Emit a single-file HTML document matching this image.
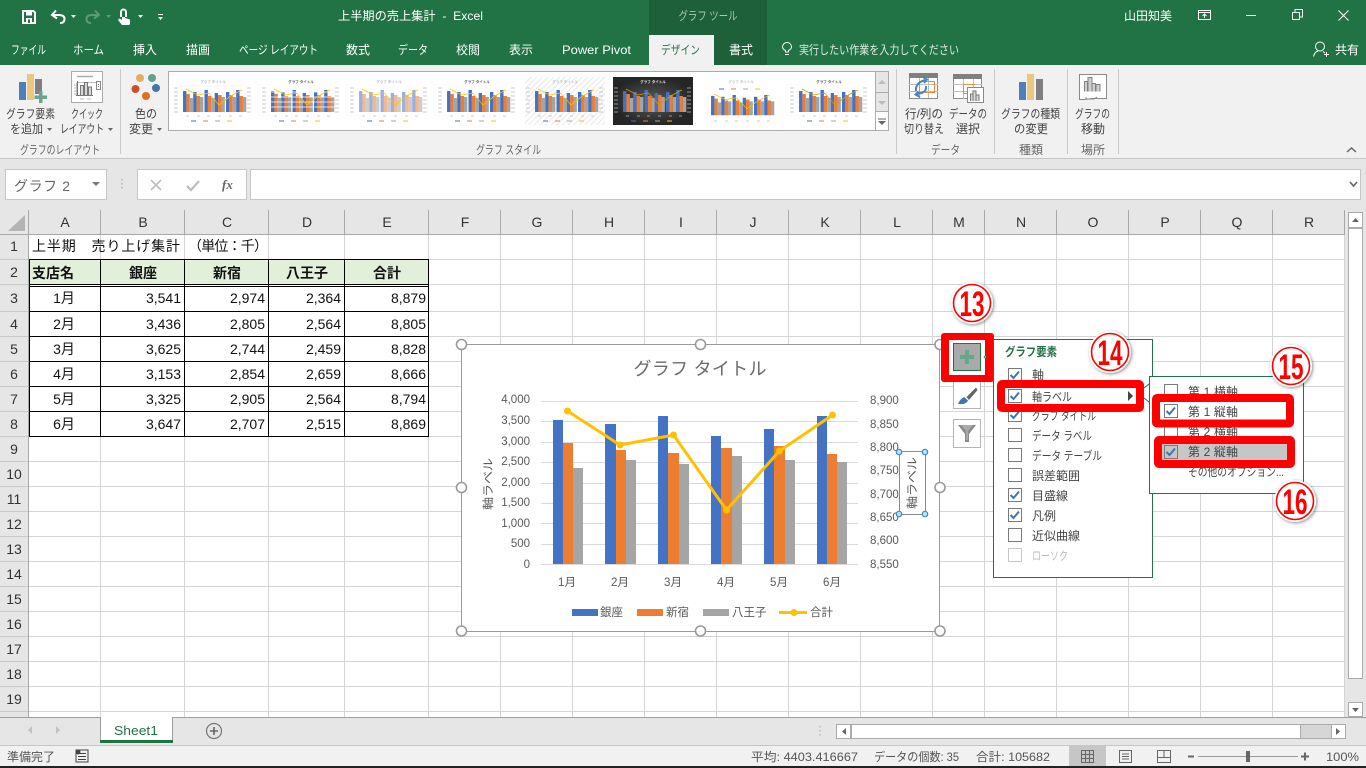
<!DOCTYPE html>
<html lang="ja"><head><meta charset="utf-8"><title>上半期の売上集計 - Excel</title>
<style>
html,body{margin:0;padding:0;background:#fff;overflow:hidden;width:1366px;height:768px}
svg{display:block;font-family:"Liberation Sans","Noto Sans CJK JP",sans-serif}
.tb{font-size:12px;fill:#fff}
.rb{font-size:12px;fill:#444}
.gp{font-size:12px;fill:#666}
.ch{font-size:14px;fill:#333;text-anchor:middle}
.c{font-size:14px;fill:#111}
.r{text-anchor:end}
.m{text-anchor:middle}
.b{font-weight:bold}
.ax{font-size:11.5px;fill:#595959}
.it{font-size:12px;fill:#444}
.st{font-size:12px;fill:#555}
.nm{font-size:35px;font-weight:bold;fill:#f00;text-anchor:middle}
</style></head><body>
<svg width="1366" height="768" viewBox="0 0 1366 768" xmlns="http://www.w3.org/2000/svg">
<defs>
<g id="bars" transform="translate(1 0) scale(1.13 1)">
<path fill="#4472c4" d="M8 14h3v21H8zM17 15h3v20h-3zM27 13h3v22h-3zM36 16h3v19h-3zM46 15h3v20h-3zM55 13h3v22h-3z"/>
<path fill="#ed7d31" d="M11 17h3v18h-3zM20 19h3v16h-3zM30 19h3v16h-3zM39 18h3v17h-3zM49 18h3v17h-3zM58 19h3v16h-3z"/>
<path fill="#a5a5a5" d="M14 21h3v14h-3zM23 20h3v15h-3zM33 21h3v14h-3zM42 20h3v15h-3zM52 20h3v15h-3zM61 20h3v15h-3z"/>
</g>
<path id="ln" d="M13 12L24.500 18L35.500 16L46 28L57.500 19L69 13" fill="none" stroke-width=".8"/>
<g id="ft"><path d="M1 11h4M1 15h4M1 19h4M1 23h4M1 27h4M1 31h4M1 35h4M74 11h4M74 15h4M74 19h4M74 23h4M74 27h4M74 31h4M74 35h4" stroke="#bbb" stroke-width=".7"/>
<path d="M13 39h3M24 39h3M34 39h3M45 39h3M56 39h3M66 39h3" stroke="#bbb" stroke-width=".7"/>
<path d="M18 44h5" stroke="#4472c4"/><path d="M30 44h5" stroke="#ed7d31"/><path d="M42 44h5" stroke="#a5a5a5"/><path d="M54 44h5" stroke="#ffc000"/></g>
<g id="cb"><rect x=".5" y=".5" width="13" height="13" fill="#fff" stroke="#7a7a7a"/></g>
<g id="ck"><rect x=".5" y=".5" width="13" height="13" fill="#fff" stroke="#7a7a7a"/><path d="M2.5 7L5.5 10L11 3.5" fill="none" stroke="#3f76b0" stroke-width="2"/></g>
<radialGradient id="dk"><stop offset="0" stop-color="#5a5a5a"/><stop offset="1" stop-color="#262626"/></radialGradient>
<filter id="sh" x="-20%" y="-20%" width="150%" height="150%"><feDropShadow dx="1" dy="1" stdDeviation="1.5" flood-color="#000" flood-opacity=".45"/></filter>
<pattern id="hat" width="4" height="4" patternUnits="userSpaceOnUse" patternTransform="rotate(45)"><rect width="4" height="4" fill="#fff"/><path d="M0 0V4" stroke="#ddd" stroke-width="1.4"/></pattern>
</defs>

<!-- title bar -->
<rect width="1366" height="65" fill="#217346"/>
<rect x="649" width="118" height="65" fill="#1e6039"/>
<rect x="649" y="35" width="65" height="30" fill="#f1f1f1"/>
<!-- QAT -->
<path fill="none" stroke="#fff" stroke-width="2" d="M23 11h10.500l1.500 1.500V23H23z"/>
<rect x="26" y="11" width="6" height="4.500" fill="#fff"/>
<rect x="26" y="18" width="6" height="5" fill="#fff"/>
<rect x="28" y="19.500" width="2" height="3.500" fill="#217346"/>
<path d="M56 10.500L52 15L57 18.500M52.500 15H59Q64.500 15 64.500 19Q64.500 23 60 23" fill="none" stroke="#fff" stroke-width="2"/>
<path d="M71 15h5l-2.500 3z" fill="#fff"/>
<path d="M95 10.500L99 15L94 18.500M98.500 15H92Q86.500 15 86.500 19Q86.500 23 91 23" fill="none" stroke="#5d9a78" stroke-width="2"/>
<path d="M106 15h5l-2.500 3z" fill="#5d9a78"/>
<path fill="#fff" d="M120 17V12a3.500 3.500 0 0 1 7 0v5h-2v-5a1.500 1.500 0 0 0-3 0v8l-2.500-1.500-1.500 1.500 4 5h7l1-1v-4.500l-5-1.500v-1z"/>
<path d="M138 15h5l-2.500 3z" fill="#fff"/>
<path d="M158 14h5v1h-5zM158 17h5l-2.500 3z" fill="#fff"/>
<text class="tb" x="338" y="20" textLength="145" lengthAdjust="spacingAndGlyphs" xml:space="preserve">上半期の売上集計  -  Excel</text>
<text x="708" y="20" font-size="12" fill="#a8c8b4" text-anchor="middle" textLength="59" lengthAdjust="spacingAndGlyphs">グラフ ツール</text>
<text class="tb" x="1124" y="20" textLength="48" lengthAdjust="spacingAndGlyphs">山田知美</text>
<path d="M1198.500 10.500h12v9h-12zM1198.500 12.500h12M1204.500 18v-4M1202.500 16l2-2 2 2" fill="none" stroke="#fff"/>
<path d="M1246 15.500h10" stroke="#fff"/>
<path d="M1292.500 12.500h7v7h-7zM1295 12v-2.500h7.500V17H1300" fill="none" stroke="#fff"/>
<path d="M1338.500 10.500l10 10M1348.500 10.500l-10 10" stroke="#fff" fill="none"/>
<!-- tabs -->
<text class="tb" x="11" y="54" textLength="35" lengthAdjust="spacingAndGlyphs">ファイル</text>
<text class="tb" x="73" y="54" textLength="31" lengthAdjust="spacingAndGlyphs">ホーム</text>
<text class="tb" x="133" y="54" textLength="24" lengthAdjust="spacingAndGlyphs">挿入</text>
<text class="tb" x="186" y="54" textLength="24" lengthAdjust="spacingAndGlyphs">描画</text>
<text class="tb" x="239" y="54" textLength="79" lengthAdjust="spacingAndGlyphs">ページ レイアウト</text>
<text class="tb" x="346" y="54" textLength="24" lengthAdjust="spacingAndGlyphs">数式</text>
<text class="tb" x="398" y="54" textLength="30" lengthAdjust="spacingAndGlyphs">データ</text>
<text class="tb" x="456" y="54" textLength="24" lengthAdjust="spacingAndGlyphs">校閲</text>
<text class="tb" x="509" y="54" textLength="24" lengthAdjust="spacingAndGlyphs">表示</text>
<text class="tb" x="562" y="54" textLength="69" lengthAdjust="spacingAndGlyphs">Power Pivot</text>
<text x="661" y="54" font-size="12" fill="#217346" textLength="39" lengthAdjust="spacingAndGlyphs">デザイン</text>
<text class="tb" x="729" y="54" textLength="24" lengthAdjust="spacingAndGlyphs">書式</text>
<path d="M785 54.500h4M785.500 52v-1.500Q782.500 49 782.500 47a4.500 4.500 0 0 1 9 0Q791.500 49 788.500 50.500V52z" fill="none" stroke="#fff"/>
<text x="799" y="54" font-size="12" fill="#dfeae4" textLength="160" lengthAdjust="spacingAndGlyphs">実行したい作業を入力してください</text>
<circle cx="1320" cy="46.500" r="4.500" fill="none" stroke="#fff"/>
<path d="M1313.500 56.500Q1314.500 52 1318 51M1323 51.500L1325 53M1324 54.500h5M1326.500 52v5" fill="none" stroke="#fff"/>
<text class="tb" x="1335" y="54" textLength="24" lengthAdjust="spacingAndGlyphs">共有</text>

<!-- ribbon -->
<rect y="65" width="1366" height="94" fill="#f1f1f1"/>
<rect y="158" width="1366" height="1" fill="#c6c6c6"/>
<path d="M120.500 69v85M896.500 69v85M994.500 69v85M1067.500 69v85M1118.500 69v85" stroke="#c9c9c9"/>
<!-- add element -->
<rect x="19" y="82" width="7" height="18" fill="#4e7fb6"/><rect x="27" y="74" width="7" height="26" fill="#eec77f"/><rect x="35" y="79" width="7" height="15" fill="#7f7f7f"/>
<path d="M39 91h3.500v4.500H47v3.500h-4.500v4H39v-4h-4.500v-3.500H39z" fill="#6ba58f"/>
<!-- quick layout -->
<rect x="71.500" y="71.500" width="31" height="31" fill="#fff" stroke="#ababab"/>
<path d="M77 76.500h16" stroke="#aaa" stroke-width="1.500"/>
<path d="M76.500 82.500h20M76.500 96v-13M76 85h-2M76 88h-2M76 91h-2M76 94h-2" stroke="#bbb" fill="none"/>
<path d="M77.500 95.500V81M80.500 95.500v-10h3v10M84.500 95.500V82.500h3v13M88.500 95.500V87h3v8.500M93 95.500H76" fill="#d8d8d8" stroke="#777"/>
<rect x="96.500" y="81.500" width="4" height="8" fill="#fff" stroke="#888"/>
<path d="M98.500 84v.7M98.500 86v.7" stroke="#555"/>
<path d="M80 99h4M87 99h4" stroke="#bbb"/>
<!-- colors -->
<circle cx="140" cy="78" r="4" fill="#e2ae62"/><circle cx="152" cy="78" r="4" fill="#5fa38f"/><circle cx="135.500" cy="89" r="4" fill="#cf4c2f"/><circle cx="156" cy="88" r="4" fill="#4276ae"/><circle cx="146" cy="96" r="4" fill="#e26f1d"/>
<!-- ribbon labels -->
<text class="rb" x="6" y="118" textLength="49" lengthAdjust="spacingAndGlyphs">グラフ要素</text>
<text class="rb" x="10" y="133" textLength="33" lengthAdjust="spacingAndGlyphs">を追加</text><path d="M47 128h5l-2.500 3z" fill="#666"/>
<text class="rb" x="71" y="118" textLength="32" lengthAdjust="spacingAndGlyphs">クイック</text>
<text class="rb" x="60" y="133" textLength="44" lengthAdjust="spacingAndGlyphs">レイアウト</text><path d="M108 128h5l-2.500 3z" fill="#666"/>
<text class="rb" x="135" y="118" textLength="22" lengthAdjust="spacingAndGlyphs">色の</text>
<text class="rb" x="129" y="133" textLength="24" lengthAdjust="spacingAndGlyphs">変更</text><path d="M157 128h5l-2.500 3z" fill="#666"/>
<text class="gp" x="20" y="154" textLength="80" lengthAdjust="spacingAndGlyphs">グラフのレイアウト</text>
<text class="gp" x="476" y="154" textLength="65" lengthAdjust="spacingAndGlyphs">グラフ スタイル</text>
<text class="rb" x="905" y="118" textLength="38" lengthAdjust="spacingAndGlyphs">行/列の</text>
<text class="rb" x="904" y="133" textLength="40" lengthAdjust="spacingAndGlyphs">切り替え</text>
<text class="rb" x="949" y="118" textLength="38" lengthAdjust="spacingAndGlyphs">データの</text>
<text class="rb" x="956" y="133" textLength="24" lengthAdjust="spacingAndGlyphs">選択</text>
<text class="gp" x="931" y="154" textLength="29" lengthAdjust="spacingAndGlyphs">データ</text>
<text class="rb" x="1001" y="118" textLength="59" lengthAdjust="spacingAndGlyphs">グラフの種類</text>
<text class="rb" x="1014" y="133" textLength="34" lengthAdjust="spacingAndGlyphs">の変更</text>
<text class="gp" x="1019" y="154" textLength="24" lengthAdjust="spacingAndGlyphs">種類</text>
<text class="rb" x="1075" y="118" textLength="35" lengthAdjust="spacingAndGlyphs">グラフの</text>
<text class="rb" x="1081" y="133" textLength="24" lengthAdjust="spacingAndGlyphs">移動</text>
<text class="gp" x="1081" y="154" textLength="24" lengthAdjust="spacingAndGlyphs">場所</text>
<!-- gallery -->
<rect x="168.500" y="71.500" width="707" height="59" fill="#fff" stroke="#ababab"/>
<rect x="875.500" y="71.500" width="13" height="59" fill="#fff" stroke="#ababab"/>
<rect x="876" y="72" width="12" height="39" fill="#e6e6e6"/>
<path d="M876 92.500h12M876 111.500h12" stroke="#ababab"/>
<path d="M878 84h8l-4-4z" fill="#bbb"/><path d="M878 101h8l-4 4z" fill="#bbb"/>
<path d="M878 121h8l-4 4z" fill="#666" stroke="none"/><path d="M878 119h8" stroke="#666"/>
<!-- thumbs -->
<g transform="translate(173 77)"><path d="M7 9h61M7 35h61" stroke="#eee" stroke-width=".6"/><text x="40" y="6" font-size="3.500" fill="#888" text-anchor="middle">グラフ タイトル</text><use href="#bars"/><use href="#ln" stroke="#ffc000"/><use href="#ft"/></g>
<g transform="translate(261 77)"><text x="40" y="6" font-size="3.500" fill="#555" font-weight="bold" text-anchor="middle">グラフ タイトル</text><use href="#bars"/><path d="M7 15h66M7 20h66M7 25h66M7 30h66" stroke="#fff" stroke-width=".8"/><use href="#ln" stroke="#ffc000"/><use href="#ft"/></g>
<g transform="translate(349 77)"><text x="40" y="6" font-size="3.500" fill="#888" text-anchor="middle">グラフ タイトル</text><use href="#bars" opacity=".55"/><use href="#ln" stroke="#ffc000"/><use href="#ft"/></g>
<g transform="translate(437 77)"><text x="40" y="6" font-size="3.500" fill="#555" font-weight="bold" text-anchor="middle">グラフ タイトル</text><use href="#bars"/><use href="#ln" stroke="#ffc000"/><use href="#ft"/></g>
<g transform="translate(525 77)"><rect width="80" height="48" fill="url(#hat)"/><text x="40" y="6" font-size="3.500" fill="#999" text-anchor="middle">グラフ タイトル</text><use href="#bars"/><use href="#ln" stroke="#ffc000"/><use href="#ft"/></g>
<g transform="translate(613 77)"><rect width="80" height="48" fill="url(#dk)"/><text x="40" y="6" font-size="3.500" fill="#eee" font-weight="bold" text-anchor="middle">グラフ タイトル</text><use href="#bars"/><use href="#ln" stroke="#d69a00"/><use href="#ft"/></g>
<g transform="translate(701 77)"><text x="40" y="6" font-size="3.500" fill="#999" text-anchor="middle">グラフ タイトル</text><path d="M18 12h5" stroke="#4472c4"/><path d="M30 12h5" stroke="#ed7d31"/><path d="M42 12h5" stroke="#a5a5a5"/><path d="M54 12h5" stroke="#ffc000"/><g transform="translate(0 6) scale(1 .92)"><use href="#bars"/><use href="#ln" stroke="#ffc000"/></g><path d="M13 44h3M24 44h3M34 44h3M45 44h3M56 44h3M66 44h3" stroke="#bbb" stroke-width=".7"/></g>
<g transform="translate(789 77)"><path d="M7 15h66M7 20h66M7 25h66M7 30h66" stroke="#e5e5e5" stroke-width=".6"/><text x="40" y="6" font-size="3.500" fill="#555" font-weight="bold" text-anchor="middle">グラフ タイトル</text><use href="#bars"/><use href="#ln" stroke="#d69a00"/><use href="#ft"/></g>
<!-- switch row col -->
<rect x="909.500" y="73.500" width="28" height="25" fill="#fff" stroke="#8a8a8a"/><rect x="909" y="73" width="29" height="5" fill="#7f7f7f"/>
<path d="M909 84.500h29M909 91.500h29M919.500 78v20M928.500 78v20" stroke="#bdbdbd"/>
<rect x="919.500" y="81.500" width="15" height="11" fill="none" stroke="#ed8a37"/>
<path d="M916 91Q915 83 925 80M923 77l4 2.500-3 3.500M926 86Q927 93 917 94M920 97l-4.500-2.500 3-3" fill="none" stroke="#4a85bf" stroke-width="2"/>
<!-- select data -->
<rect x="953.500" y="74.500" width="28" height="24" fill="#fff" stroke="#8a8a8a"/><rect x="953" y="74" width="29" height="5" fill="#7f7f7f"/>
<path d="M953 84.500h29M953 91.500h29M963.500 79v20M973.500 79v20" stroke="#bdbdbd"/>
<path d="M963.500 84.500H975M963.500 84.500V93.500H970" fill="none" stroke="#ed8a37"/>
<rect x="967.500" y="87.500" width="16" height="15" fill="#fff" stroke="#8a8a8a"/>
<path d="M970.500 101v-7h2.500v7M973 101v-10h3v10M976 101v-6h3v6" fill="#d8d8d8" stroke="#777"/>
<!-- change type -->
<rect x="1019" y="82" width="7" height="18" fill="#4e7fb6"/><rect x="1027" y="74" width="7" height="26" fill="#eec77f"/><rect x="1036" y="79" width="7" height="21" fill="#7f7f7f"/>
<!-- move -->
<path d="M1079.500 74.500h27v24h-15l-3 0.500-3 .5h-6z" fill="#fff" stroke="#8a8a8a"/>
<path d="M1086 97v2h8l3-2" fill="none" stroke="#8a8a8a"/>
<path d="M1084.500 91.500V81.500h3V91.500M1088 91.500V77.500h4V91.500M1092 91.500V83.500h3.500V91.500M1096 91.500V84.500h4V91.500" fill="#cfcfcf" stroke="#808080"/>
<path d="M1347 152l4.500-4 4.500 4" fill="none" stroke="#666" stroke-width="1.500"/>

<!-- formula bar -->
<rect y="159" width="1366" height="51" fill="#e6e6e6"/>
<rect x="5.500" y="169.500" width="101" height="30" fill="#fff" stroke="#c6c6c6"/>
<text x="14" y="191" font-size="14" fill="#666" textLength="56" lengthAdjust="spacing">グラフ 2</text>
<path d="M92 182h8l-4 4z" fill="#777"/>
<path d="M122 179v1.500M122 183v1.500M122 187v1.500" stroke="#999"/>
<rect x="137.500" y="169.500" width="109" height="30" fill="#fff" stroke="#c6c6c6"/>
<path d="M151 180l10 10M161 180l-10 10" stroke="#bdbdbd" stroke-width="1.600" fill="none"/>
<path d="M187 186l4 4 8-9" stroke="#bdbdbd" stroke-width="2.200" fill="none"/>
<text x="222" y="189" font-family="Liberation Serif" font-style="italic" font-weight="bold" font-size="13" fill="#666">fx</text>
<rect x="250.500" y="169.500" width="1110" height="30" fill="#fff" stroke="#c6c6c6"/>
<path d="M1350 182l3.500 4 3.500-4" fill="none" stroke="#666" stroke-width="1.600"/>

<!-- sheet grid -->
<rect x="0" y="210" width="1366" height="507" fill="#fff"/>
<path stroke="#d4d4d4" fill="none" d="M29 259.500H1345M29 284.500H1345M29 311.500H1345M29 336.500H1345M29 361.500H1345M29 386.500H1345M29 411.500H1345M29 436.500H1345M29 461.500H1345M29 486.500H1345M29 511.500H1345M29 536.500H1345M29 561.500H1345M29 586.500H1345M29 611.500H1345M29 636.500H1345M29 661.500H1345M29 686.500H1345M29 711.500H1345M100.500 235V717M184.500 235V717M268.500 235V717M344.500 235V717M428.500 235V717M500.500 235V717M572.500 235V717M644.500 235V717M716.500 235V717M788.500 235V717M860.500 235V717M932.500 235V717M984.500 235V717M1056.500 235V717M1128.500 235V717M1200.500 235V717M1272.500 235V717M1344.500 235V717"/>
<!-- headers -->
<rect y="210" width="1345" height="24" fill="#e6e6e6"/>
<rect y="234" width="28" height="483" fill="#e6e6e6"/>
<path d="M25 215V231H8z" fill="#b4b4b4"/>
<path stroke="#a8a8a8" d="M28.500 210V717M100.500 210V234M184.500 210V234M268.500 210V234M344.500 210V234M428.500 210V234M500.500 210V234M572.500 210V234M644.500 210V234M716.500 210V234M788.500 210V234M860.500 210V234M932.500 210V234M984.500 210V234M1056.500 210V234M1128.500 210V234M1200.500 210V234M1272.500 210V234M1344.500 210V234M0 234.500H1345"/>
<path stroke="#c9c9c9" d="M0 259.500H28M0 284.500H28M0 311.500H28M0 336.500H28M0 361.500H28M0 386.500H28M0 411.500H28M0 436.500H28M0 461.500H28M0 486.500H28M0 511.500H28M0 536.500H28M0 561.500H28M0 586.500H28M0 611.500H28M0 636.500H28M0 661.500H28M0 686.500H28M0 711.500H28"/>
<text class="ch" x="65" y="227">A</text><text class="ch" x="143" y="227">B</text><text class="ch" x="227" y="227">C</text><text class="ch" x="307" y="227">D</text><text class="ch" x="387" y="227">E</text><text class="ch" x="465" y="227">F</text><text class="ch" x="537" y="227">G</text><text class="ch" x="609" y="227">H</text><text class="ch" x="681" y="227">I</text><text class="ch" x="753" y="227">J</text><text class="ch" x="825" y="227">K</text><text class="ch" x="897" y="227">L</text><text class="ch" x="959" y="227">M</text><text class="ch" x="1021" y="227">N</text><text class="ch" x="1093" y="227">O</text><text class="ch" x="1165" y="227">P</text><text class="ch" x="1237" y="227">Q</text><text class="ch" x="1309" y="227">R</text>
<text class="ch" x="14" y="251">1</text><text class="ch" x="14" y="277">2</text><text class="ch" x="14" y="303">3</text><text class="ch" x="14" y="329">4</text><text class="ch" x="14" y="354">5</text><text class="ch" x="14" y="379">6</text><text class="ch" x="14" y="404">7</text><text class="ch" x="14" y="429">8</text><text class="ch" x="14" y="454">9</text><text class="ch" x="14" y="479">10</text><text class="ch" x="14" y="504">11</text><text class="ch" x="14" y="529">12</text><text class="ch" x="14" y="554">13</text><text class="ch" x="14" y="579">14</text><text class="ch" x="14" y="604">15</text><text class="ch" x="14" y="629">16</text><text class="ch" x="14" y="654">17</text><text class="ch" x="14" y="679">18</text><text class="ch" x="14" y="704">19</text>
<!-- table -->
<rect x="29" y="260" width="400" height="24" fill="#e2efda"/>
<path stroke="#000" fill="none" d="M29 259.500H429M29 284.500H429M29 286.500H429M29 311.500H429M29 336.500H429M29 361.500H429M29 386.500H429M29 411.500H429M29 436.500H429M29.500 259V437M100.500 259V437M184.500 259V437M268.500 259V437M344.500 259V437M428.500 259V437"/>
<text class="c" x="32" y="251" textLength="148" lengthAdjust="spacing">上半期　売り上げ集計</text>
<text class="c" x="188" y="251" textLength="80" lengthAdjust="spacing">（単位：千）</text>
<text class="c b" x="32" y="278">支店名</text><text class="c b m" x="143" y="278">銀座</text><text class="c b m" x="227" y="278">新宿</text><text class="c b m" x="307" y="278">八王子</text><text class="c b m" x="387" y="278">合計</text>
<text class="c m" x="64" y="303">1月</text><text class="c r" x="181" y="303">3,541</text><text class="c r" x="265" y="303">2,974</text><text class="c r" x="341" y="303">2,364</text><text class="c r" x="426" y="303">8,879</text>
<text class="c m" x="64" y="329">2月</text><text class="c r" x="181" y="329">3,436</text><text class="c r" x="265" y="329">2,805</text><text class="c r" x="341" y="329">2,564</text><text class="c r" x="426" y="329">8,805</text>
<text class="c m" x="64" y="354">3月</text><text class="c r" x="181" y="354">3,625</text><text class="c r" x="265" y="354">2,744</text><text class="c r" x="341" y="354">2,459</text><text class="c r" x="426" y="354">8,828</text>
<text class="c m" x="64" y="379">4月</text><text class="c r" x="181" y="379">3,153</text><text class="c r" x="265" y="379">2,854</text><text class="c r" x="341" y="379">2,659</text><text class="c r" x="426" y="379">8,666</text>
<text class="c m" x="64" y="404">5月</text><text class="c r" x="181" y="404">3,325</text><text class="c r" x="265" y="404">2,905</text><text class="c r" x="341" y="404">2,564</text><text class="c r" x="426" y="404">8,794</text>
<text class="c m" x="64" y="429">6月</text><text class="c r" x="181" y="429">3,647</text><text class="c r" x="265" y="429">2,707</text><text class="c r" x="341" y="429">2,515</text><text class="c r" x="426" y="429">8,869</text>

<!-- chart -->
<rect x="461.500" y="344.500" width="478" height="287" fill="#fff" stroke="#9a9a9a"/>
<text x="700" y="375" font-size="18" fill="#6a6a6a" text-anchor="middle" textLength="133" lengthAdjust="spacing">グラフ タイトル</text>
<path stroke="#d9d9d9" d="M541 401.500H858M541 421.500H858M541 442.500H858M541 462.500H858M541 483.500H858M541 503.500H858M541 523.500H858M541 544.500H858M541 564.500H858"/>
<g fill="#4472c4"><rect x="553" y="420" width="10" height="144"/><rect x="605" y="424" width="11" height="140"/><rect x="658" y="416" width="10" height="148"/><rect x="711" y="436" width="10" height="128"/><rect x="764" y="429" width="10" height="135"/><rect x="817" y="416" width="10" height="148"/></g>
<g fill="#ed7d31"><rect x="563" y="443" width="10" height="121"/><rect x="616" y="450" width="10" height="114"/><rect x="668" y="453" width="11" height="111"/><rect x="721" y="448" width="11" height="116"/><rect x="774" y="446" width="11" height="118"/><rect x="827" y="454" width="10" height="110"/></g>
<g fill="#a5a5a5"><rect x="573" y="468" width="10" height="96"/><rect x="626" y="460" width="10" height="104"/><rect x="679" y="464" width="10" height="100"/><rect x="732" y="456" width="10" height="108"/><rect x="785" y="460" width="10" height="104"/><rect x="837" y="462" width="10" height="102"/></g>
<path d="M567.500 411L620 445L673.500 435L726.500 510L779.500 451L832.500 415" fill="none" stroke="#ffc000" stroke-width="3"/>
<g fill="#ffc000"><circle cx="567.500" cy="411" r="3.500"/><circle cx="620" cy="445" r="3.500"/><circle cx="673.500" cy="435" r="3.500"/><circle cx="726.500" cy="510" r="3.500"/><circle cx="779.500" cy="451" r="3.500"/><circle cx="832.500" cy="415" r="3.500"/></g>
<g class="ax" text-anchor="end"><text x="530" y="403">4,000</text><text x="530" y="424">3,500</text><text x="530" y="445">3,000</text><text x="530" y="465">2,500</text><text x="530" y="486">2,000</text><text x="530" y="506">1,500</text><text x="530" y="527">1,000</text><text x="530" y="547">500</text><text x="530" y="568">0</text></g>
<g class="ax"><text x="870" y="404">8,900</text><text x="870" y="428">8,850</text><text x="870" y="451">8,800</text><text x="870" y="474">8,750</text><text x="870" y="498">8,700</text><text x="870" y="521">8,650</text><text x="870" y="544">8,600</text><text x="870" y="568">8,550</text></g>
<g class="ax" text-anchor="middle"><text x="567" y="586">1月</text><text x="620" y="586">2月</text><text x="673" y="586">3月</text><text x="726" y="586">4月</text><text x="779" y="586">5月</text><text x="832" y="586">6月</text></g>
<text class="ax" transform="translate(492 484) rotate(-90)" text-anchor="middle" textLength="52" lengthAdjust="spacingAndGlyphs">軸ラベル</text>
<rect x="899.500" y="451.500" width="26" height="63" fill="none" stroke="#8c8c8c"/>
<text class="ax" transform="translate(916 483) rotate(-90)" text-anchor="middle" textLength="52" lengthAdjust="spacingAndGlyphs">軸ラベル</text>
<g fill="#bfe0fa" stroke="#2f8fdc" stroke-width="1.200"><circle cx="899" cy="452" r="2.700"/><circle cx="925" cy="452" r="2.700"/><circle cx="899" cy="514" r="2.700"/><circle cx="925" cy="514" r="2.700"/></g>
<rect x="572" y="609" width="26" height="7" fill="#4472c4"/><text class="ax" x="600" y="616">銀座</text>
<rect x="637" y="609" width="26" height="7" fill="#ed7d31"/><text class="ax" x="666" y="616">新宿</text>
<rect x="703" y="609" width="26" height="7" fill="#a5a5a5"/><text class="ax" x="732" y="616">八王子</text>
<path d="M779 612.500h28" stroke="#ffc000" stroke-width="3"/><circle cx="794" cy="612.500" r="3.500" fill="#ffc000"/><text class="ax" x="810" y="616">合計</text>
<g fill="#fff" stroke="#9a9a9a" stroke-width="1.600"><circle cx="461.500" cy="344.500" r="5"/><circle cx="700.500" cy="344.500" r="5"/><circle cx="940" cy="344.500" r="5"/><circle cx="461.500" cy="487.500" r="5"/><circle cx="940" cy="487.500" r="5"/><circle cx="461.500" cy="631" r="5"/><circle cx="700.500" cy="631" r="5"/><circle cx="940" cy="631" r="5"/></g>

<!-- chart buttons -->
<rect x="953.500" y="380.500" width="27" height="28" fill="#fff" stroke="#b5b5b5"/>
<path d="M958 404Q960 399 964 397L968 400.500Q966 405 958 404z" fill="#3f76b0"/>
<path d="M966.500 397L976 387.500L977.500 390L969 400z" fill="#666"/>
<rect x="953.500" y="419.500" width="27" height="28" fill="#fff" stroke="#b5b5b5"/>
<path d="M958 425h18l-7 9v8h-4v-8z" fill="#8a8a8a"/><path d="M961 425h12l-5 6v9h-2v-9z" fill="#a9a9a9"/>
<rect x="941" y="333" width="53" height="49" rx="3" fill="#f00"/>
<rect x="949" y="340" width="36" height="35" fill="#fff"/>
<rect x="953.500" y="343.500" width="27" height="27" fill="#a9a9a9" stroke="#217346"/>
<path d="M965 350h4v5h5v4h-5v5h-4v-5h-5v-4h5z" fill="#62a88a"/>

<!-- panel 1 -->
<path d="M984 357l2-2v4z" fill="#fff" stroke="#217346" stroke-width=".8"/>
<rect x="993.500" y="339.500" width="159" height="238" fill="#fff" stroke="#217346"/>
<text x="1005" y="356" font-size="12" font-weight="bold" fill="#217346" textLength="52" lengthAdjust="spacingAndGlyphs">グラフ要素</text>
<use href="#ck" x="1008" y="368"/><text class="it" x="1032" y="379">軸</text>
<use href="#ck" x="1008" y="408"/><text class="it" x="1032" y="420" textLength="64" lengthAdjust="spacingAndGlyphs">グラフ タイトル</text>
<use href="#cb" x="1008" y="428"/><text class="it" x="1032" y="440" textLength="60" lengthAdjust="spacingAndGlyphs">データ ラベル</text>
<use href="#cb" x="1008" y="448"/><text class="it" x="1032" y="460" textLength="70" lengthAdjust="spacingAndGlyphs">データ テーブル</text>
<use href="#cb" x="1008" y="468"/><text class="it" x="1032" y="480" textLength="48" lengthAdjust="spacingAndGlyphs">誤差範囲</text>
<use href="#ck" x="1008" y="488"/><text class="it" x="1032" y="500" textLength="36" lengthAdjust="spacingAndGlyphs">目盛線</text>
<use href="#ck" x="1008" y="508"/><text class="it" x="1032" y="520" textLength="24" lengthAdjust="spacingAndGlyphs">凡例</text>
<use href="#cb" x="1008" y="528"/><text class="it" x="1032" y="540" textLength="48" lengthAdjust="spacingAndGlyphs">近似曲線</text>
<rect x="1008.500" y="548.500" width="13" height="13" fill="#fff" stroke="#c8c8c8"/><text x="1032" y="560" font-size="12" fill="#bbb" textLength="36" lengthAdjust="spacingAndGlyphs">ローソク</text>

<!-- submenu -->
<rect x="1149.500" y="376.500" width="154" height="117" fill="#fff" stroke="#217346"/>
<use href="#cb" x="1164" y="384"/><text class="it" x="1188" y="396" textLength="50" lengthAdjust="spacing">第 1 横軸</text>
<use href="#cb" x="1164" y="424"/><text class="it" x="1188" y="436" textLength="50" lengthAdjust="spacing">第 2 横軸</text>
<text class="it" x="1188" y="476" textLength="96" lengthAdjust="spacingAndGlyphs">その他のオプション...</text>

<!-- red frames -->
<rect x="1001" y="384" width="139" height="24" rx="1" fill="#fff" stroke="#f00" stroke-width="8"/>
<use href="#ck" x="1008" y="389"/><text class="it" x="1032" y="401" textLength="40" lengthAdjust="spacingAndGlyphs">軸ラベル</text>
<path d="M1128 391l5 5-5 5z" fill="#444"/>
<path d="M1144 388l5-4M1144 398l5 4" stroke="#217346" fill="none"/>
<rect x="1156" y="398" width="134" height="25.500" rx="1" fill="#fff" stroke="#f00" stroke-width="8"/>
<use href="#ck" x="1164" y="404"/><text class="it" x="1188" y="416" textLength="50" lengthAdjust="spacing">第 1 縦軸</text>
<rect x="1158" y="440" width="133" height="24" rx="1" fill="#c6c6c6" stroke="#f00" stroke-width="8"/>
<rect x="1164.500" y="445.500" width="13" height="13" fill="#c6c6c6" stroke="#7a7a7a"/><path d="M1166.500 452l3 3 5.500-6.500" fill="none" stroke="#3f76b0" stroke-width="2"/>
<text class="it" x="1188" y="456" textLength="50" lengthAdjust="spacing">第 2 縦軸</text>

<!-- number badges -->
<g filter="url(#sh)"><circle cx="972" cy="303" r="21" fill="#fff"/><circle cx="972" cy="303" r="18.500" fill="#fff" stroke="#f00" stroke-width="1.600"/></g>
<text class="nm" x="972" y="316" textLength="25" lengthAdjust="spacingAndGlyphs">13</text>
<g filter="url(#sh)"><circle cx="1110" cy="352" r="21" fill="#fff"/><circle cx="1110" cy="352" r="18.500" fill="#fff" stroke="#f00" stroke-width="1.600"/></g>
<text class="nm" x="1110" y="365" textLength="25" lengthAdjust="spacingAndGlyphs">14</text>
<g filter="url(#sh)"><circle cx="1291" cy="366" r="21" fill="#fff"/><circle cx="1291" cy="366" r="18.500" fill="#fff" stroke="#f00" stroke-width="1.600"/></g>
<text class="nm" x="1291" y="379" textLength="25" lengthAdjust="spacingAndGlyphs">15</text>
<g filter="url(#sh)"><circle cx="1295" cy="501" r="21" fill="#fff"/><circle cx="1295" cy="501" r="18.500" fill="#fff" stroke="#f00" stroke-width="1.600"/></g>
<text class="nm" x="1295" y="514" textLength="25" lengthAdjust="spacingAndGlyphs">16</text>

<!-- vertical scrollbar -->
<rect x="1345" y="210" width="21" height="507" fill="#e6e6e6"/>
<rect x="1348.500" y="228.500" width="14" height="450" fill="#fff" stroke="#ababab"/>
<rect x="1348.500" y="212.500" width="14" height="15" fill="#fff" stroke="#ababab"/>
<path d="M1352 222h7l-3.500-4z" fill="#666"/>
<rect x="1348.500" y="702.500" width="14" height="14" fill="#fff" stroke="#ababab"/>
<path d="M1352 708h7l-3.500 4z" fill="#666"/>

<!-- sheet tabs -->
<rect y="717" width="1366" height="28" fill="#e6e6e6"/>
<path d="M0 717.500H1366" stroke="#9e9e9e"/>
<rect x="100" y="717" width="73" height="26" fill="#fff"/>
<path d="M100.500 717v25M172.500 717v25" stroke="#9e9e9e"/>
<rect x="100" y="740" width="73" height="3" fill="#217346"/>
<text x="114" y="735" font-size="13" fill="#217346" textLength="44" lengthAdjust="spacingAndGlyphs">Sheet1</text>
<path d="M32 726v8l-4-4zM56 726v8l4-4z" fill="#c0c0c0"/>
<circle cx="214" cy="731" r="7.500" fill="none" stroke="#777" stroke-width="1.200"/>
<path d="M210 731h8M214 727v8" stroke="#666" stroke-width="1.600"/>
<path d="M820 726v1.500M820 730v1.500M820 734v1.500" stroke="#aaa"/>
<rect x="836.500" y="724.500" width="509" height="14" fill="#d6d6d6" stroke="#ababab"/>
<rect x="851.500" y="724.500" width="449" height="14" fill="#fff" stroke="#ababab"/>
<rect x="836.500" y="724.500" width="14" height="14" fill="#fff" stroke="#ababab"/>
<rect x="1331.500" y="724.500" width="14" height="14" fill="#fff" stroke="#ababab"/>
<path d="M846 728v7l-4-3.500zM1336 728v7l4-3.500z" fill="#666"/>

<!-- status bar -->
<rect y="745" width="1366" height="21" fill="#f1f1f1"/>
<path d="M0 745.500H1366" stroke="#c6c6c6"/>
<rect y="766" width="1366" height="2" fill="#222"/>
<text class="st" x="7" y="761" textLength="48" lengthAdjust="spacingAndGlyphs">準備完了</text>
<circle cx="78" cy="752" r="2.500" fill="#444"/>
<path d="M76 750h12v12H76z" fill="none" stroke="#444"/><path d="M78 753h8v1h-8zM78 756h8v1h-8zM78 759h8v1h-8z" fill="#444"/>
<text class="st" x="751" y="761" textLength="107" lengthAdjust="spacingAndGlyphs">平均: 4403.416667</text>
<text class="st" x="874" y="761" textLength="85" lengthAdjust="spacingAndGlyphs">データの個数: 35</text>
<text class="st" x="976" y="761" textLength="74" lengthAdjust="spacingAndGlyphs">合計: 105682</text>
<rect x="1069" y="746" width="37" height="20" fill="#c6c6c6"/>
<path d="M1081.500 750.500h12v12h-12zM1081.500 754.500h12M1081.500 758.500h12M1085.500 750.500v12M1089.500 750.500v12" fill="none" stroke="#666"/>
<path d="M1119.500 750.500h12v12h-12zM1122 754h7M1122 756.500h7M1122 759h7" fill="none" stroke="#666"/>
<path d="M1157.500 750.500h13v12h-13zM1157.500 757.500h13M1164 750.500v7" fill="none" stroke="#666"/>
<path d="M1188 756.500h6" stroke="#666" stroke-width="2"/>
<path d="M1198 756.500h100" stroke="#999"/>
<rect x="1246" y="751" width="4" height="11" fill="#666"/>
<path d="M1301 756.500h8M1305 752.500v8" stroke="#666" stroke-width="2"/>
<text class="st" x="1326" y="761" textLength="33" lengthAdjust="spacingAndGlyphs">100%</text>
</svg>
</body></html>
